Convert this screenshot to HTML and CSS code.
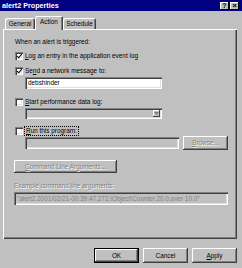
FILE: index.html
```html
<!DOCTYPE html>
<html>
<head>
<meta charset="utf-8">
<link rel="stylesheet" href="styles.css">
</head>
<body>
<div class="win">
  <div class="title">
    <span class="title-text">alert2 Properties</span>
    <div class="tbtns">
      <span class="tbtn">?</span>
      <span class="tbtn x">×</span>
    </div>
  </div>
  <div class="tabs">
    <div class="tab t-general">General</div>
    <div class="tab sel t-action">Action</div>
    <div class="tab t-schedule">Schedule</div>
  </div>
  <div class="panel">
    <div class="heading">When an alert is triggered:</div>
    <div class="row r1"><span class="cb checked"></span><span><u>L</u>og an entry in the application event log</span></div>
    <div class="row r2"><span class="cb checked"></span><span>Se<u>n</u>d a network message to:</span></div>
    <div class="field f-msg">debshinder</div>
    <div class="row r3"><span class="cb"></span><span><u>S</u>tart performance data log:</span></div>
    <div class="field combo dis"><span class="arrow"><svg width="5" height="3" viewBox="0 0 5 3"><path d="M0 0h5L2.5 3z" fill="#808080"/></svg></span></div>
    <div class="row r4"><span class="cb"></span><span class="focus"><u>R</u>un this program:</span></div>
    <div class="prog">
      <div class="field dis f-prog"></div>
      <div class="btn disabled b-browse"><u>B</u>rowse...</div>
    </div>
    <div class="btn disabled b-cmd"><u>C</u>ommand Line Arguments...</div>
    <div class="ex-label">Example command line arguments:</div>
    <div class="field dis ex-box">"alert2.2001/02/21-00:39:47.272,\Object\Counter,20.0,over 10.0"</div>
  </div>
  <div class="buttons">
    <div class="btn def">OK</div>
    <div class="btn">Cancel</div>
    <div class="btn"><u>A</u>pply</div>
  </div>
</div>
</body>
</html>
```
FILE: styles.css
```css
html, body {
  margin: 0;
  padding: 0;
  background: #c0c0c0;
}
.win {
  width: 242px;
  height: 268px;
  overflow: hidden;
  background: #c0c0c0;
  font-family: "Liberation Sans", Arial, sans-serif;
  font-size: 6.4px;
  color: #000;
}
.title {
  height: 11px;
  background: #000080;
  display: flex;
  align-items: center;
  justify-content: space-between;
  padding: 0 3px 0 2px;
}
.title-text {
  color: #fff;
  font-weight: bold;
  font-size: 7.2px;
  line-height: 11px;
}
.tbtns {
  display: flex;
  gap: 1px;
}
.tbtn {
  width: 9px;
  height: 8px;
  box-sizing: border-box;
  background: #c0c0c0;
  box-shadow: inset -1px -1px #000, inset 1px 1px #fff;
  font-size: 7px;
  font-weight: bold;
  line-height: 8px;
  text-align: center;
  color: #000;
}
.tbtn.x {
  font-size: 8px;
}
.tabs {
  display: flex;
  align-items: flex-end;
  height: 13px;
  margin-top: 5px;
  padding-left: 5px;
  position: relative;
  z-index: 1;
}
.tab {
  height: 11px;
  box-sizing: border-box;
  line-height: 11px;
  text-align: center;
  border-top-left-radius: 2px;
  border-top-right-radius: 2px;
  box-shadow: inset 1px 1px #fff, inset -1px 0 #404040, inset -2px 0 #808080;
}
.t-general { width: 30px; }
.t-action {
  width: 28px;
  height: 14px;
  line-height: 12px;
  margin-bottom: -1px;
  background: #c0c0c0;
  box-shadow: inset 1px 1px #fff, inset -1px 0 #404040, inset -2px 0 #808080;
}
.t-schedule { width: 33px; }
.panel {
  width: 234px;
  height: 210px;
  margin-left: 3px;
  box-sizing: border-box;
  padding: 9px 0 0 11px;
  box-shadow: inset 1px 1px #fff, inset -1px -1px #404040, inset -2px -2px #808080;
  display: flex;
  flex-direction: column;
  align-items: flex-start;
}
.heading {
  line-height: 8px;
  height: 8px;
  margin-left: 1px;
}
.row {
  display: flex;
  align-items: center;
  height: 8px;
  line-height: 8px;
  margin-left: 1px;
  gap: 2px;
}
.r1 { margin-top: 6px; }
.r2 { margin-top: 7px; }
.r3 { margin-top: 9px; }
.r4 { margin-top: 8px; }
.cb {
  width: 8px;
  height: 8px;
  box-sizing: border-box;
  background: #fff;
  box-shadow: inset 1px 1px #808080, inset 2px 2px #404040, inset -1px -1px #fff, inset -2px -2px #dfdfdf;
  position: relative;
  flex: none;
}
.cb.checked::after {
  content: "";
  position: absolute;
  left: 2.5px;
  top: 1px;
  width: 2px;
  height: 3.5px;
  border-right: 1.3px solid #000;
  border-bottom: 1.3px solid #000;
  transform: rotate(40deg);
}
.focus {
  outline: 1px dotted #000;
  outline-offset: 0;
  padding: 0 1px;
}
.field {
  box-sizing: border-box;
  background: #fff;
  box-shadow: inset 1px 1px #808080, inset 2px 2px #404040, inset -1px -1px #fff, inset -2px -2px #dfdfdf;
  padding: 0 3px;
  white-space: nowrap;
  overflow: hidden;
}
.field.dis {
  background: #c0c0c0;
  color: #808080;
}
.f-msg {
  width: 137px;
  height: 12px;
  line-height: 12px;
  margin: 2px 0 0 11px;
}
.combo {
  width: 137px;
  height: 11px;
  margin: 2px 0 0 11px;
  display: flex;
  justify-content: flex-end;
  align-items: center;
  padding: 2px;
}
.arrow {
  width: 7px;
  height: 7px;
  background: #c0c0c0;
  box-shadow: inset -1px -1px #404040, inset 1px 1px #fff;
  display: flex;
  align-items: center;
  justify-content: center;
}
.arrow svg { display: block; }
.prog {
  display: flex;
  align-items: center;
  gap: 4px;
  margin: 1px 0 0 11px;
  height: 14px;
}
.f-prog {
  width: 154px;
  height: 12px;
}
.btn {
  box-sizing: border-box;
  background: #c0c0c0;
  box-shadow: inset -1px -1px #404040, inset 1px 1px #fff, inset -2px -2px #808080;
  text-align: center;
  white-space: nowrap;
}
.btn.disabled {
  color: #808080;
  text-shadow: 0.7px 0.7px 0 #fff;
}
.b-browse {
  width: 45px;
  height: 14px;
  line-height: 14px;
}
.b-cmd {
  width: 103px;
  height: 13px;
  line-height: 13px;
  margin-top: 10px;
}
.ex-label {
  margin-top: 9px;
  height: 8px;
  line-height: 8px;
  color: #808080;
  text-shadow: 0.7px 0.7px 0 #fff;
}
.ex-box {
  width: 214px;
  height: 13px;
  line-height: 13px;
  margin-top: 2px;
  padding-left: 3px;
}
.buttons {
  display: flex;
  justify-content: flex-end;
  gap: 4px;
  margin-top: 9px;
  padding-right: 5px;
}
.buttons .btn {
  width: 45px;
  height: 15px;
  line-height: 15px;
}
.btn.def {
  box-shadow: inset 0 0 0 1px #000, inset -2px -2px #404040, inset 2px 2px #fff, inset -3px -3px #808080;
}
u {
  text-decoration: underline;
  text-underline-offset: 1px;
}
```
